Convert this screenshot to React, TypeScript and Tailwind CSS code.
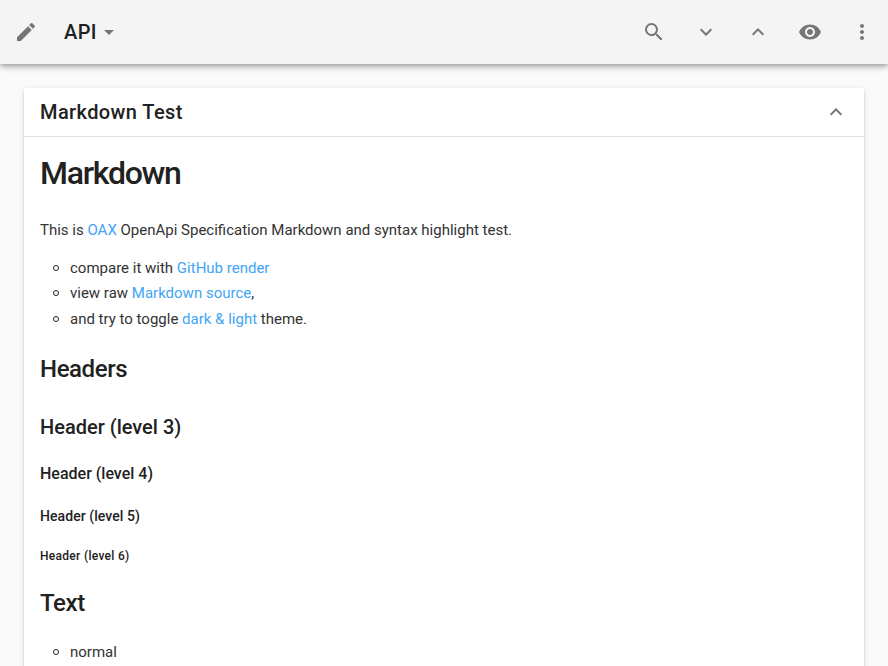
import React from 'react';
import { MdEdit, MdArrowDropDown, MdSearch, MdExpandMore, MdExpandLess, MdVisibility, MdMoreVert } from 'react-icons/md';

const link = 'text-[#42a5f5]';

function Bullet({ children }: { children: React.ReactNode }) {
  return (
    <li className="flex h-[25.5px] items-center">
      <span className="mr-[11px] ml-[13px] size-[6px] rounded-full border border-[#212121]" />
      <span>{children}</span>
    </li>
  );
}

export default function App() {
  return (
    <div className="h-[666px] overflow-hidden bg-[#fafafa] font-[Roboto,sans-serif] text-[15px] text-[#333]">
      <header className="relative flex h-16 items-center bg-[#f4f4f4] px-[14px] text-[#757575] shadow-[0_2px_4px_-1px_rgba(0,0,0,.2),0_4px_5px_rgba(0,0,0,.14),0_1px_10px_rgba(0,0,0,.12)]">
        <MdEdit size={24} />
        <button className="ml-[26px] flex items-center text-xl font-medium tracking-[.4px] text-[#212121]">
          API <MdArrowDropDown size={24} className="text-[#757575]" />
        </button>
        <nav className="ml-auto flex gap-7">
          <MdSearch size={24} />
          <MdExpandMore size={24} />
          <MdExpandLess size={24} />
          <MdVisibility size={24} />
          <MdMoreVert size={24} />
        </nav>
      </header>
      <main className="mx-6 mt-6 h-[700px] rounded-[2px] bg-white shadow-[0_3px_1px_-2px_rgba(0,0,0,.2),0_2px_2px_rgba(0,0,0,.14),0_1px_5px_rgba(0,0,0,.12)]">
        <div className="flex h-[49px] items-center justify-between border-b border-[#e0e0e0] px-4 text-[#212121]">
          <h2 className="text-xl font-medium tracking-[.4px]">Markdown Test</h2>
          <MdExpandLess size={24} className="text-[#757575]" />
        </div>
        <article className="px-4 [&>:is(h1,h2,h3,h4,h5,h6)]:text-[#212121]">
          <h1 className="pt-[16px] text-[32px] leading-10 font-medium tracking-[-1.25px]">Markdown</h1>
          <p className="mt-[25px] leading-[25px]">
            This is <a className={link}>OAX</a> OpenApi Specification Markdown and syntax highlight test.
          </p>
          <ul className="mt-[12px]">
            <Bullet>compare it with <a className={link}>GitHub render</a></Bullet>
            <Bullet>view raw <a className={link}>Markdown source</a>,</Bullet>
            <Bullet>and try to toggle <a className={link}>dark &amp; light</a> theme.</Bullet>
          </ul>
          <h2 className="mt-[21px] text-2xl leading-8 font-medium tracking-[-.4px]">Headers</h2>
          <h3 className="mt-[28px] text-xl leading-7 font-medium">Header (level 3)</h3>
          <h4 className="mt-[21px] text-base leading-6 font-medium">Header (level 4)</h4>
          <h5 className="mt-[20px] text-sm leading-5 font-medium tracking-[.07px]">Header (level 5)</h5>
          <h6 className="mt-[22px] text-xs leading-4 font-medium tracking-[.3px]">Header (level 6)</h6>
          <h2 className="mt-[23px] text-2xl leading-8 font-medium tracking-[-.4px]">Text</h2>
          <ul className="mt-[21px]"><Bullet>normal</Bullet></ul>
        </article>
      </main>
    </div>
  );
}
